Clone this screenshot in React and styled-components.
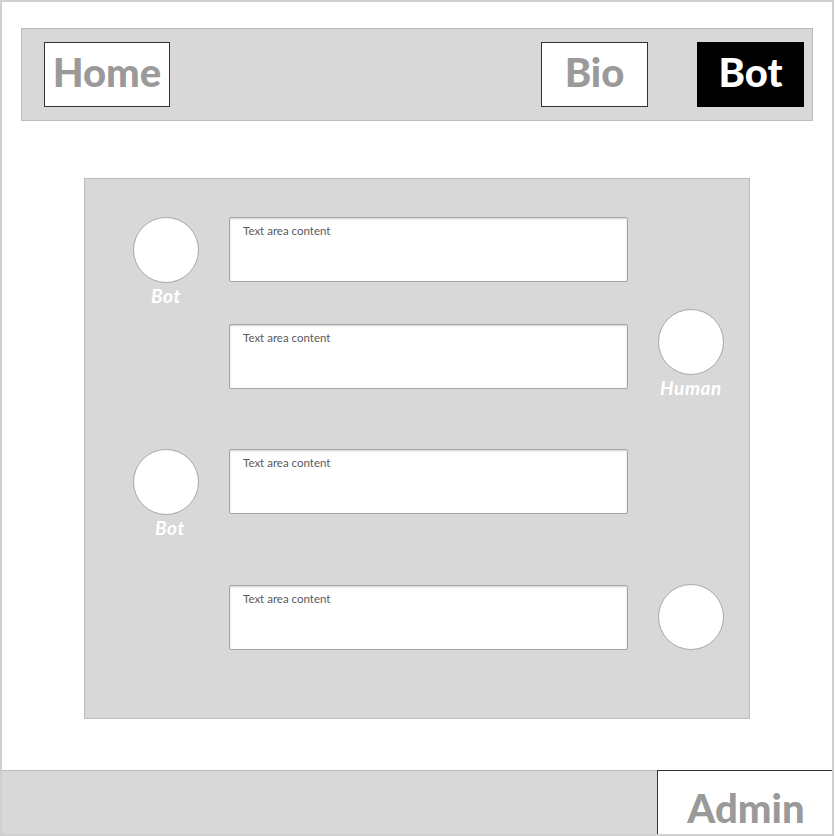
import React from 'react';
import styled, { createGlobalStyle, css } from 'styled-components';

const GlobalStyle = createGlobalStyle`
  html, body {
    margin: 0;
    padding: 0;
    background: #ffffff;
    font-family: 'Lato', 'Liberation Sans', sans-serif;
  }
  * { box-sizing: border-box; }
`;

// --- Frame ---
const Frame = styled.div`
  width: 834px;
  height: 836px;
  border: 2px solid #d0d0d0;
  display: flex;
  flex-direction: column;
  background: #fff;
`;

// --- Top navigation ---
const NavBar = styled.header`
  margin: 26px 19px 0 19px;
  height: 93px;
  background: #d8d8d8;
  border: 1px solid #bcbcbc;
  display: flex;
  align-items: flex-start;
  padding: 13px 8px 0 22px;
`;

const NavButton = styled.button`
  width: ${props => props.$width}px;
  height: 65px;
  padding: 0 0 5px 0;
  border: 1px solid #333;
  background: #fff;
  color: #9a9a9a;
  font-family: 'Lato', 'Liberation Sans', sans-serif;
  font-weight: 900;
  font-size: 40px;
  line-height: 1;
  display: flex;
  align-items: center;
  justify-content: center;
  cursor: pointer;

  ${props => props.$active && css`
    background: #000;
    border-color: #000;
    color: #fff;
  `}
`;

const NavSpacer = styled.div`
  flex: 1;
`;

const NavGap = styled.div`
  width: 49px;
`;

// --- Chat panel ---
const Panel = styled.main`
  margin: 57px 0 0 82px;
  width: 666px;
  height: 541px;
  background: #d8d8d8;
  border: 1px solid #bcbcbc;
  padding: 0 0 0 48px;
  display: flex;
  flex-direction: column;
`;

const Row = styled.div`
  margin-top: ${props => props.$gap}px;
  display: grid;
  grid-template-columns: 66px 399px 66px;
  column-gap: 30px;
  align-items: start;
`;

const AvatarCol = styled.div`
  grid-column: ${props => props.$side === 'right' ? 3 : 1};
  grid-row: 1;
  display: flex;
  flex-direction: column;
  align-items: center;
`;

const Avatar = styled.div`
  width: 66px;
  height: 66px;
  border-radius: 50%;
  background: #fff;
  border: 1px solid #a8a8a8;
`;

const AvatarLabel = styled.span`
  margin-top: 2px;
  height: 22px;
  line-height: 22px;
  font-size: 19px;
  font-style: italic;
  font-weight: 700;
  letter-spacing: 0.6px;
  color: #fff;
  white-space: nowrap;
  transform: translateX(${props => props.$shift || 0}px);
`;

const MessageBox = styled.textarea`
  grid-column: 2;
  grid-row: 1;
  margin-top: ${props => props.$offset || 0}px;
  width: 399px;
  height: 65px;
  resize: none;
  border: 1px solid #a4a4a4;
  border-radius: 2px;
  background: #fff;
  box-shadow: inset 0 1px 2px rgba(0, 0, 0, 0.18);
  padding: 6px 13px;
  font-family: 'Lato', 'Liberation Sans', sans-serif;
  font-size: 11.5px;
  color: #5a5a5a;
  outline: none;
`;

// --- Footer ---
const Footer = styled.footer`
  margin-top: auto;
  height: 64px;
  background: #d8d8d8;
  border-top: 1px solid #bcbcbc;
  display: flex;
  justify-content: flex-end;
`;

const AdminButton = styled.button`
  width: 175px;
  height: 64px;
  margin-top: -1px;
  padding: 10px 0 0 2px;
  border: none;
  border-top: 1px solid #333;
  border-left: 1px solid #333;
  background: #fff;
  color: #9a9a9a;
  font-family: 'Lato', 'Liberation Sans', sans-serif;
  font-weight: 900;
  font-size: 40px;
  line-height: 1;
  cursor: pointer;
`;

const messages = [
  { id: 1, who: 'Bot', side: 'left', gap: 38, offset: 0 },
  { id: 2, who: 'Human', side: 'right', gap: 2, offset: 15 },
  { id: 3, who: 'Bot', side: 'left', gap: 50, offset: 0, shift: 4 },
  { id: 4, who: null, side: 'right', gap: 45, offset: 1 },
];

const App = () => (
  <>
    <GlobalStyle />
    <Frame>
      <NavBar>
        <NavButton $width={126}>Home</NavButton>
        <NavSpacer />
        <NavButton $width={107}>Bio</NavButton>
        <NavGap />
        <NavButton $width={107} $active>Bot</NavButton>
      </NavBar>

      <Panel>
        {messages.map(m => (
          <Row key={m.id} $gap={m.gap}>
            <AvatarCol $side={m.side}>
              <Avatar />
              {m.who && <AvatarLabel $shift={m.shift}>{m.who}</AvatarLabel>}
            </AvatarCol>
            <MessageBox $offset={m.offset} readOnly defaultValue="Text area content" />
          </Row>
        ))}
      </Panel>

      <Footer>
        <AdminButton>Admin</AdminButton>
      </Footer>
    </Frame>
  </>
);

export default App;
